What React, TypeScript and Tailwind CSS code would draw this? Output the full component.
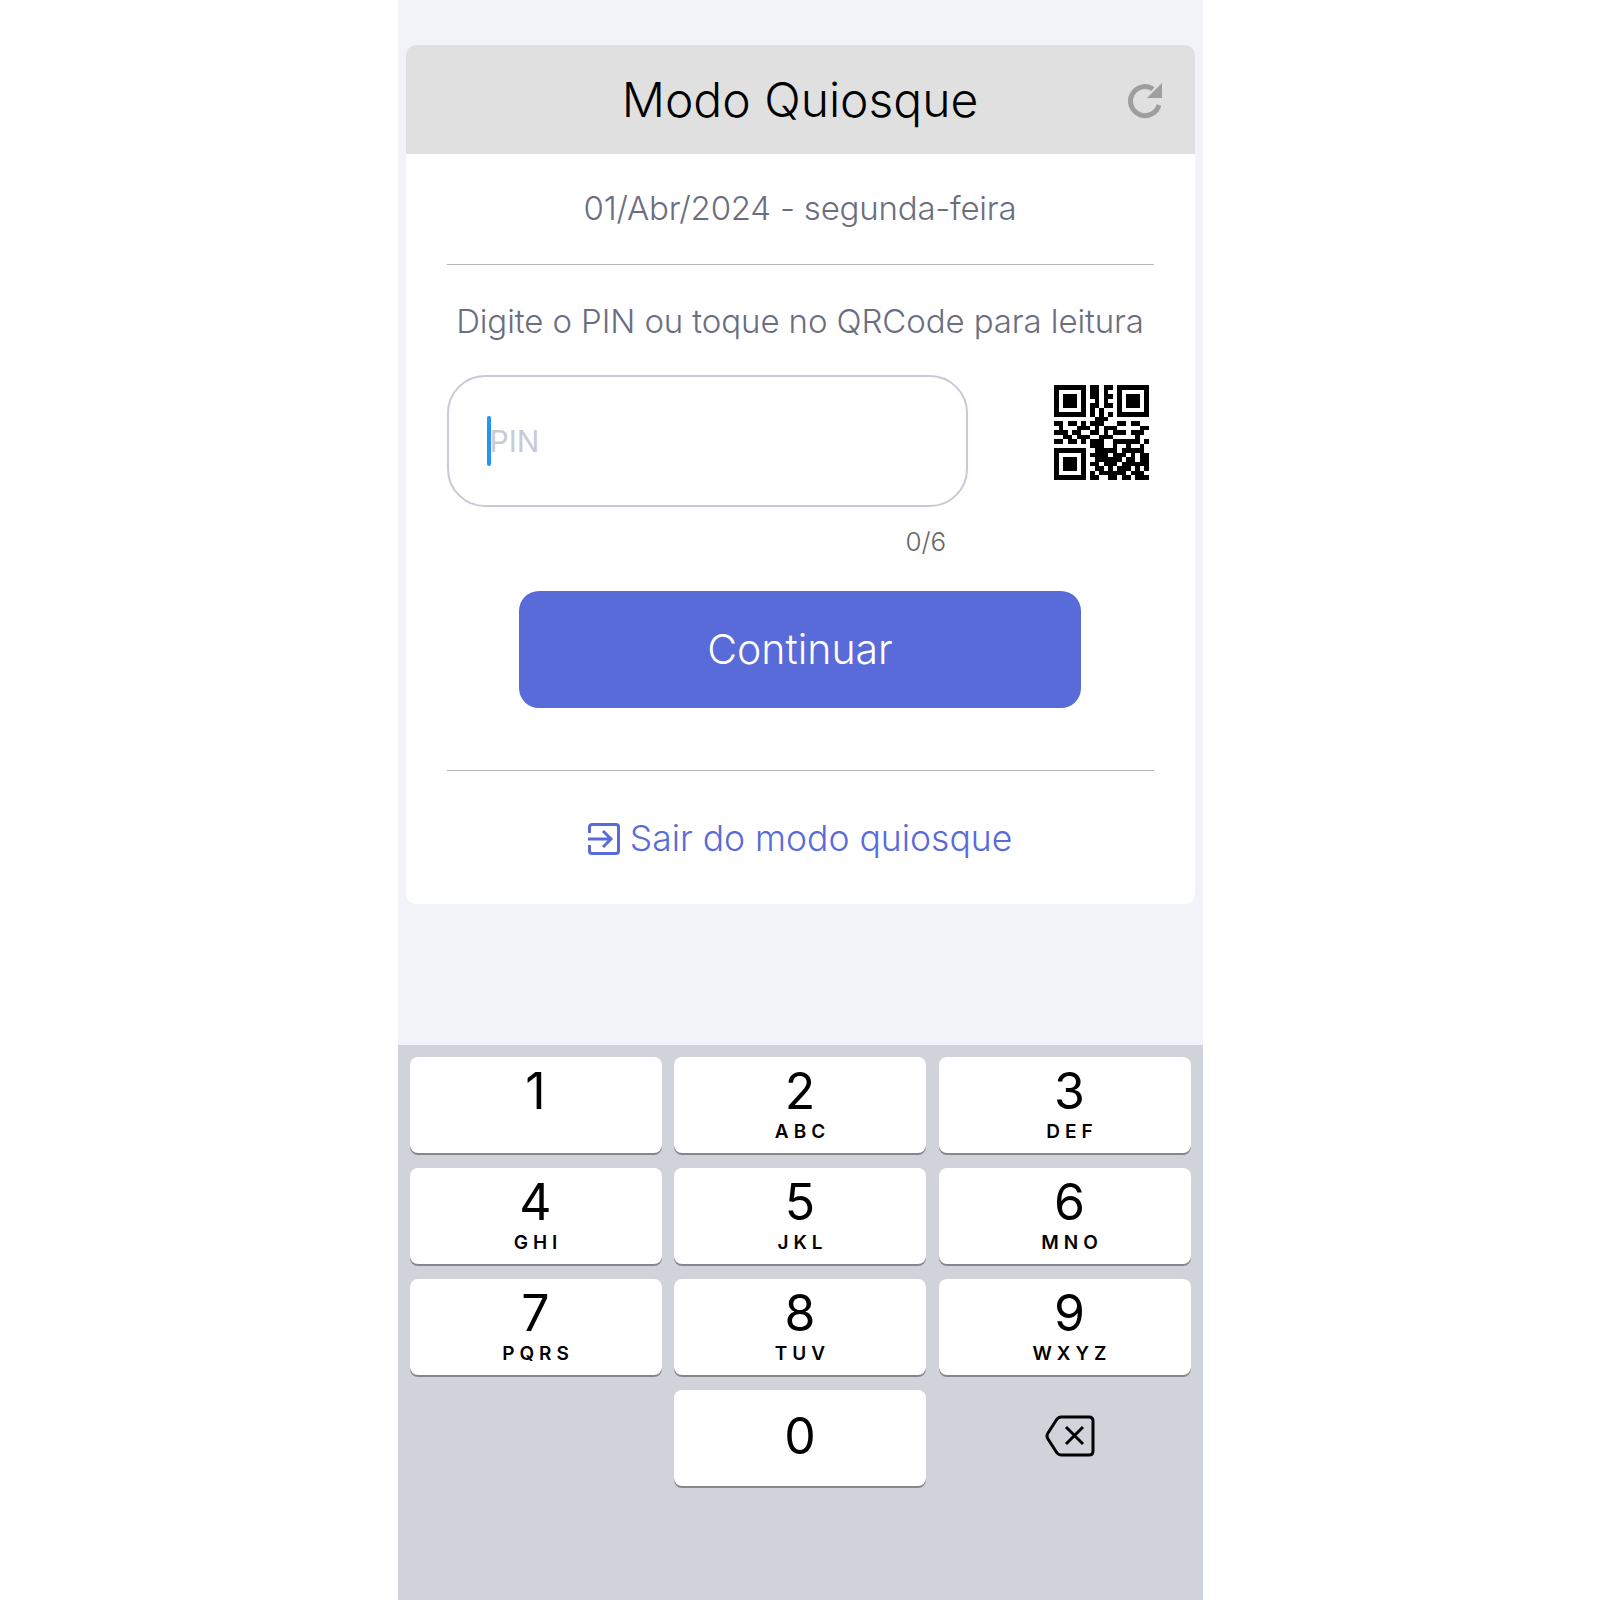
import React from "react";

const QR = [
  "111111101101101111111",
  "100000101101001000001",
  "101110101101101011101",
  "101110100101001011101",
  "101110101101101011101",
  "100000101010001000001",
  "111111101010101111111",
  "000000000111000000000",
  "110110101110001101100",
  "010001110101110000011",
  "111011001101011101110",
  "001101110011100000100",
  "110110101110011111101",
  "000000001110010010010",
  "111111100111110111110",
  "100000101111011101011",
  "101110100111111011011",
  "101110101101110111111",
  "101110100110101110101",
  "100000101011111101110",
  "111111101100110110111",
];

const KEYS = [
  ["1", ""],
  ["2", "ABC"],
  ["3", "DEF"],
  ["4", "GHI"],
  ["5", "JKL"],
  ["6", "MNO"],
  ["7", "PQRS"],
  ["8", "TUV"],
  ["9", "WXYZ"],
];

const QrCode = () => (
  <svg width="95" height="95" viewBox="0 0 21 21" shapeRendering="crispEdges">
    {QR.map((row, y) =>
      row.split("").map((c, x) =>
        c === "1" ? <rect key={`${x}-${y}`} x={x} y={y} width="1" height="1" fill="#000" /> : null
      )
    )}
  </svg>
);

const Key = ({ n, l, right }: { n: string; l: string; right?: boolean }) => (
  <div
    className={`flex h-[96px] w-[252px] flex-col items-center rounded-[8px] bg-white pt-[9px] shadow-[0_2px_0_#85878c] ${
      right ? "pl-[10px]" : ""
    }`}
  >
    <span className="text-[50px] leading-[50px] text-black">{n}</span>
    <span className="mt-[5px] pl-[5px] text-[19px] leading-[22px] font-semibold tracking-[5px] text-black">{l}</span>
  </div>
);

export default function App() {
  return (
    <div className="flex h-[1600px] w-full justify-center bg-white">
      <div className="flex h-[1600px] w-[805px] flex-col bg-[#f1f3f9]">
        <div className="mx-2 mt-[45px] flex h-[859px] flex-col overflow-hidden rounded-[10px] bg-white font-['Inter',sans-serif]">
          {/* ヘッダー */}
          <div className="relative flex h-[109px] items-center justify-center bg-[#e0e0e0]">
            <h1 className="text-[48px] leading-none font-[350] text-black">Modo Quiosque</h1>
            <svg className="absolute top-[35px] right-[30px]" width="40" height="40" viewBox="0 0 40 40" fill="none">
              <path d="M28 9A14.500 14.500 0 1 0 34 25" stroke="#9e9e9e" strokeWidth="5" />
              <path d="M37 3v15H22z" fill="#9e9e9e" />
            </svg>
          </div>

          <div className="flex flex-1 flex-col px-[41px]">
            <p className="flex h-[111px] items-center justify-center border-b border-[#b5b5b8] text-[33px] font-[350] tracking-[-0.2px] text-[#6b6e80]">
              01/Abr/2024 - segunda-feira
            </p>
            <p className="mt-[36px] text-center text-[33px] leading-[40px] font-[350] tracking-[-0.1px] text-[#6b6e80]">
              Digite o PIN ou toque no QRCode para leitura
            </p>

            {/* PIN */}
            <div className="mt-[34px] flex items-start justify-between">
              <div className="flex h-[132px] w-[521px] items-center rounded-[38px] border-2 border-[#c8cad6] bg-white pl-[38px]">
                <span className="h-[50px] w-[4px] rounded-full bg-[#2196f3]" />
                <span className="-ml-[1px] text-[30px] text-[#c8cad6]">PIN</span>
              </div>
              <div className="mt-[10px] mr-[5px]">
                <QrCode />
              </div>
            </div>
            <p className="mt-[19px] ml-[459px] text-[26px] leading-[32px] font-light text-[#666666]">0/6</p>

            <button className="mx-auto mt-[33px] flex h-[117px] w-[562px] items-center justify-center rounded-[20px] bg-[#596bd9] text-[41px] font-[350] text-white">
              Continuar
            </button>

            <div className="mt-[62px] border-b border-[#b5b5b8]" />

            <div className="mt-[48px] flex items-center justify-center gap-[10px] text-[#596bd9]">
              <svg width="32" height="32" viewBox="0 0 32 32" fill="none" stroke="#596bd9" strokeWidth="3">
                <path d="M1.500 10V4a2.500 2.500 0 0 1 2.500-2.500h24a2.500 2.500 0 0 1 2.500 2.500v24a2.500 2.500 0 0 1-2.500 2.500H4a2.500 2.500 0 0 1-2.500-2.500v-6" />
                <path d="M0 16h23M15 8l8 8-8 8" />
              </svg>
              <span className="text-[35.5px] leading-[40px] font-[350]">Sair do modo quiosque</span>
            </div>
          </div>
        </div>

        {/* テンキー */}
        <div className="mt-[141px] flex-1 bg-[#d0d3da] px-[12px] pt-[12px] font-['Inter',sans-serif]">
          <div className="grid grid-cols-[252px_252px_252px] gap-x-[12.5px] gap-y-[15px]">
            {KEYS.map(([n, l], i) => (
              <Key key={n} n={n} l={l} right={i % 3 === 2} />
            ))}
            <div />
            <div className="flex h-[96px] w-[252px] items-center justify-center rounded-[8px] bg-white pb-[4px] shadow-[0_2px_0_#85878c]">
              <span className="text-[50px] leading-[50px] text-black">0</span>
            </div>
            <div className="flex items-center justify-center pb-[4px] pl-[10px]">
              <svg width="50" height="42" viewBox="0 0 50 42" fill="none" stroke="#000" strokeWidth="3">
                <path d="M16 2h28q4 0 4 4v30q0 4-4 4H16Q14 40 12 38L3 24Q1 21 3 18L12 4Q14 2 16 2z" strokeLinejoin="round" />
                <path d="M21 12l17 17M38 12L21 29" />
              </svg>
            </div>
          </div>
        </div>
      </div>
    </div>
  );
}
